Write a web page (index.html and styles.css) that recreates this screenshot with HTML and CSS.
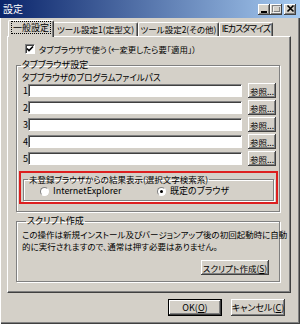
FILE: index.html
```html
<!DOCTYPE html>
<html lang="ja">
<head>
    <meta charset="UTF-8">
    <title>設定</title>
    <link rel="stylesheet" href="styles.css">
</head>
<body>
    <div class="window">
        <div class="titlebar">
            <span class="title">設定</span>
            <div class="caption-btns">
                <span class="cap-btn"><svg width="12" height="10" viewBox="0 0 12 10"><rect x="3" y="7" width="6" height="2" fill="#000"/></svg></span>
                <span class="cap-btn"><svg width="12" height="10" viewBox="0 0 12 10"><rect x="2.5" y="1.5" width="7" height="6" fill="none" stroke="#808080"/><rect x="2" y="1" width="8" height="2" fill="#808080"/><rect x="3.5" y="2.5" width="7" height="6" fill="none" stroke="#fff" opacity="0.7"/></svg></span>
                <span class="cap-btn close"><svg width="11" height="10" viewBox="0 0 11 10"><path d="M2.5 1.5 L8.5 7.5 M8.5 1.5 L2.5 7.5" stroke="#000" stroke-width="1.6"/></svg></span>
            </div>
        </div>
        <div class="client">
            <div class="tabs">
                <div class="tab active"><span class="focus">一般設定</span></div>
                <div class="tab tab2">ツール設定1(定型文)</div>
                <div class="tab tab3">ツール設定2(その他)</div>
                <div class="tab tab4">IEカスタマイズ</div>
            </div>
            <div class="panel">
                <div class="check-row">
                    <span class="checkbox"><svg width="8" height="8" viewBox="0 0 8 8"><path d="M1 3.5 L3 5.5 L7 1.5" fill="none" stroke="#000" stroke-width="1.6"/></svg></span>
                    <span class="check-label">タブブラウザで使う（←変更したら要「適用」）</span>
                </div>

                <fieldset class="group browser-group">
                    <legend>タブブラウザ設定</legend>
                    <div class="caption">タブブラウザのプログラムファイルパス</div>
                    <div class="path-row"><span class="num">1</span><span class="field"></span><span class="btn ref">参照...</span></div>
                    <div class="path-row"><span class="num">2</span><span class="field"></span><span class="btn ref">参照...</span></div>
                    <div class="path-row"><span class="num">3</span><span class="field"></span><span class="btn ref">参照...</span></div>
                    <div class="path-row"><span class="num">4</span><span class="field"></span><span class="btn ref">参照...</span></div>
                    <div class="path-row"><span class="num">5</span><span class="field"></span><span class="btn ref">参照...</span></div>

                    <div class="highlight">
                        <fieldset class="group result-group">
                            <legend class="result-title">未登録ブラウザからの結果表示(選択文字検索系)</legend>
                            <div class="radios">
                                <span class="radio-item first"><span class="radio"></span>InternetExplorer</span>
                                <span class="radio-item"><span class="radio checked"></span>既定のブラウザ</span>
                            </div>
                        </fieldset>
                    </div>
                </fieldset>

                <fieldset class="group script-group">
                    <legend>スクリプト作成</legend>
                    <p class="note">この操作は新規インストール及びバージョンアップ後の初回起動時に自動<br>的に実行されますので、通常は押す必要はありません。</p>
                    <div class="script-actions"><span class="btn script-btn">スクリプト作成(<u>S</u>)</span></div>
                </fieldset>
            </div>
            <div class="footer">
                <span class="btn dlg-btn default">OK(<u>O</u>)</span>
                <span class="btn dlg-btn">キャンセル(<u>C</u>)</span>
            </div>
        </div>
    </div>
</body>
</html>
```

FILE: styles.css
```css
*{
    box-sizing: border-box;
}

body{
    margin: 0;
    background-color: #d4d0c8;
    font-family: "Noto Sans CJK JP", "Noto Sans", sans-serif;
    font-size: 9px;
    font-feature-settings: "palt";
    color: #000;
}

.window{
    width: 300px;
    height: 324px;
    background-color: #d4d0c8;
}

.titlebar{
    height: 18px;
    background: linear-gradient(to right, #0a246a, #a6caf0);
    display: flex;
    align-items: center;
    justify-content: space-between;
    padding: 0 4px 0 3px;
}

.title{
    color: #fff;
    font-size: 10px;
    line-height: 12px;
}

.caption-btns{
    display: flex;
    align-items: center;
}

.cap-btn{
    width: 12px;
    height: 11px;
    background-color: #d4d0c8;
    box-shadow: inset -1px -1px #404040, inset 1px 1px #fff, inset -2px -2px #808080;
    display: flex;
    align-items: center;
    justify-content: center;
}

.cap-btn.close{
    margin-left: 2px;
}

.client{
    height: 306px;
    padding: 2px 0 0 7px;
    box-shadow: inset 1px 0 #fff, inset -1px -1px #404040, inset -2px -2px #808080;
}

.tabs{
    display: flex;
    align-items: flex-end;
    height: 16px;
    padding-left: 1px;
}

.tab{
    height: 14px;
    line-height: 12px;
    text-align: center;
    white-space: nowrap;
    overflow: hidden;
    border-top: 1px solid #fff;
    border-left: 1px solid #fff;
    border-right: 1px solid #404040;
    border-radius: 2px 2px 0 0;
    box-shadow: inset -1px 0 #808080;
    font-size: 8.5px;
}

.tab.active{
    height: 17px;
    width: 46px;
    margin-bottom: -1px;
    position: relative;
    z-index: 1;
    background-color: #d4d0c8;
    padding-top: 1px;
    font-size: 9px;
}

.focus{
    display: inline-block;
    outline: 1px dotted #000;
    outline-offset: 0;
    padding: 0 1px;
    line-height: 11px;
}

.tab2{
    width: 85px;
    margin-left: -1px;
}

.tab3{
    width: 81px;
}

.tab4{
    width: 54px;
    font-size: 9px;
    letter-spacing: -1px;
}

.panel{
    width: 284px;
    height: 257px;
    border-top: 1px solid #fff;
    border-left: 1px solid #fff;
    border-right: 1px solid #404040;
    border-bottom: 1px solid #404040;
    box-shadow: inset -1px -1px #808080;
    padding: 0 8px;
}

.check-row{
    display: flex;
    align-items: center;
    height: 12px;
    margin-top: 6px;
    padding-left: 9px;
}

.checkbox{
    width: 10px;
    height: 10px;
    background-color: #fff;
    border-top: 1px solid #808080;
    border-left: 1px solid #808080;
    border-right: 1px solid #fff;
    border-bottom: 1px solid #fff;
    box-shadow: inset 1px 1px #404040;
    display: flex;
    align-items: center;
    justify-content: center;
    margin-right: 4px;
}

.check-label{
    font-size: 8.4px;
    line-height: 12px;
}

.group{
    margin: 0;
    padding: 0;
    min-width: 0;
    border: 1px solid #808080;
    box-shadow: 1px 1px 0 #fff, inset 1px 1px 0 #fff;
}

.group legend{
    padding: 0 1px;
    margin-left: 4px;
    line-height: 12px;
}

.group legend.result-title{
    font-size: 8.5px;
}

.browser-group{
    margin-top: 4px;
    width: 264px;
    padding-bottom: 7px;
}

.caption{
    line-height: 12px;
    padding-left: 5px;
    font-size: 8.6px;
}

.path-row{
    display: flex;
    align-items: flex-start;
    height: 15px;
    margin-bottom: 2px;
    padding: 0 3px 0 6px;
}

.num{
    width: 5px;
    line-height: 14px;
    margin-top: 1px;
}

.field{
    flex: 1;
    height: 13px;
    margin-top: 1px;
    background-color: #fff;
    border-top: 1px solid #808080;
    border-left: 1px solid #808080;
    border-right: 1px solid #fff;
    border-bottom: 1px solid #fff;
    box-shadow: inset 1px 1px #404040;
}

.btn{
    display: flex;
    align-items: center;
    justify-content: center;
    background-color: #d4d0c8;
    box-shadow: inset -1px -1px #404040, inset 1px 1px #fff, inset -2px -2px #808080;
    white-space: nowrap;
    line-height: 12px;
}

.ref{
    width: 28px;
    height: 15px;
    margin-left: 6px;
    font-size: 8.5px;
}

.highlight{
    width: 259px;
    margin: 5px 0 0 2px;
    border: 2px solid #dd1f1f;
    padding: 0 2px 1px 2px;
}

.result-group{
    width: 251px;
    padding: 0 0 3px 0;
}

.radios{
    display: flex;
    align-items: center;
    height: 12px;
    padding-left: 16px;
}

.radio-item{
    display: flex;
    align-items: center;
    line-height: 12px;
}

.radio-item.first{
    width: 117px;
}

.radio{
    width: 9px;
    height: 9px;
    border-radius: 50%;
    background-color: #fff;
    border: 1px solid #808080;
    border-right-color: #fff;
    border-bottom-color: #fff;
    margin-right: 4px;
    display: flex;
    align-items: center;
    justify-content: center;
}

.radio.checked::after{
    content: "";
    width: 3px;
    height: 3px;
    border-radius: 50%;
    background-color: #000;
}

.script-group{
    margin-top: 3px;
    width: 264px;
    padding: 0 0 6px 5px;
}

.note{
    margin: 1px 0 0 0;
    line-height: 12px;
    font-size: 8.5px;
    white-space: nowrap;
}

.script-actions{
    display: flex;
    justify-content: flex-end;
    padding-right: 10px;
    margin-top: 8px;
}

.script-btn{
    width: 68px;
    height: 15px;
    font-size: 8.5px;
}

.footer{
    display: flex;
    justify-content: flex-end;
    gap: 9px;
    margin-top: 6px;
    padding-right: 15px;
}

.dlg-btn{
    width: 54px;
    height: 17px;
}

.dlg-btn.default{
    box-shadow: inset 0 0 0 1px #000, inset -2px -2px #404040, inset 2px 2px #fff, inset -3px -3px #808080;
}

u{
    text-decoration-thickness: 1px;
    text-underline-offset: 1px;
}
```
